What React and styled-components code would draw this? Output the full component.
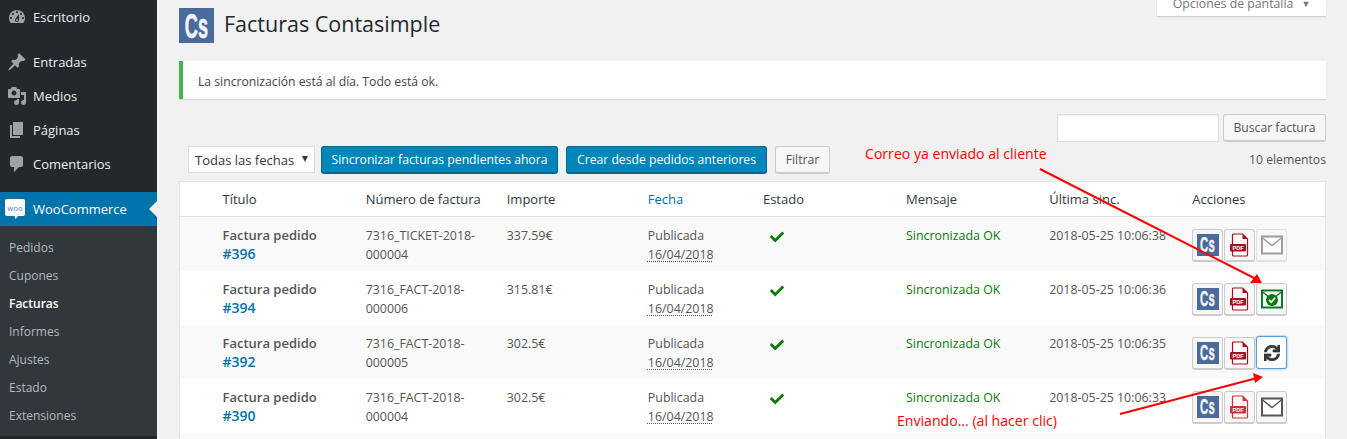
import React from "react";
import styled, { createGlobalStyle } from "styled-components";
import { FaCheck, FaSync } from "react-icons/fa";

const GlobalStyle = createGlobalStyle`
  html, body {
    margin: 0;
    padding: 0;
    background: #f1f1f1;
  }
  body {
    font-family: "Open Sans", "Liberation Sans", sans-serif;
    font-size: 13px;
    color: #444;
  }
`;

const Page = styled.div`
  position: relative;
  display: flex;
  width: 1347px;
  height: 439px;
  overflow: hidden;
`;

/* sidebar */
const Sidebar = styled.nav`
  flex: 0 0 157px;
  background: #23282d;
`;

const MenuGroup = styled.div`
  margin-bottom: 11px;
`;

const MenuItem = styled.div`
  position: relative;
  display: flex;
  align-items: center;
  height: 34px;
  padding-left: ${(p) => (p.$active ? "5px" : "7px")};
  gap: ${(p) => (p.$active ? "8px" : "6px")};
  font-size: 13px;
  color: ${(p) => (p.$active ? "#fff" : "#eee")};
  background: ${(p) => (p.$active ? "#0073aa" : "transparent")};

  svg {
    flex: 0 0 20px;
    fill: #9ea3a8;
  }

  ${(p) =>
    p.$active &&
    `&::after {
      content: "";
      position: absolute;
      right: 0;
      top: 9px;
      border: 8px solid transparent;
      border-right-color: #f1f1f1;
    }`}
`;

const SubMenu = styled.div`
  background: #32373c;
  padding: 7px 0;
`;

const SubItem = styled.div`
  height: 28px;
  line-height: 30px;
  padding-left: 9px;
  font-size: 12px;
  color: ${(p) => (p.$current ? "#fff" : "#b4b9be")};
  font-weight: ${(p) => (p.$current ? 600 : 400)};
`;

/* main */
const Main = styled.main`
  flex: 1;
  min-width: 0;
  padding: 8px 21px 0 22px;
`;

const ScreenTab = styled.div`
  position: absolute;
  top: 0;
  right: 21px;
  display: flex;
  justify-content: center;
  align-items: center;
  gap: 8px;
  width: 169px;
  height: 6px;
  padding-bottom: 10px;
  overflow: hidden;
  background: #fff;
  color: #72777c;
  font-size: 12.3px;
  box-shadow: 0 1px 1px rgba(0, 0, 0, 0.14);

  span {
    font-size: 9px;
  }
`;

const TitleRow = styled.header`
  display: flex;
  align-items: flex-start;
  gap: 10px;
  height: 35px;
  margin-bottom: 18px;
`;

const PageTitle = styled.h1`
  margin: 0;
  font-size: 21.5px;
  font-weight: 400;
  line-height: 32px;
  color: #23282d;
`;

const Notice = styled.div`
  height: 38px;
  line-height: 42px;
  padding-left: 15px;
  margin-bottom: 15px;
  background: #fff;
  border-left: 4px solid #46b450;
  box-shadow: 0 1px 1px rgba(0, 0, 0, 0.1);
  color: #444;
  font-size: 12.2px;
`;

const SearchRow = styled.div`
  display: flex;
  justify-content: flex-end;
  gap: 4px;
  margin-bottom: 4px;
`;

const SearchInput = styled.input`
  box-sizing: border-box;
  width: 162px;
  height: 28px;
  background: #fff;
  border: 1px solid #ddd;
  box-shadow: inset 0 1px 2px rgba(0, 0, 0, 0.07);
`;

const Toolbar = styled.div`
  display: flex;
  align-items: flex-start;
  height: 28px;
  padding-left: 9px;
  margin-bottom: 7px;
`;

const FakeSelect = styled.div`
  box-sizing: border-box;
  position: relative;
  width: 127px;
  height: 27px;
  line-height: 26px;
  padding-left: 6px;
  margin-right: 6px;
  background: #fff;
  border: 1px solid #ddd;
  color: #32373c;
  font-size: 13px;

  &::after {
    content: "";
    position: absolute;
    right: 6px;
    top: 9px;
    border: 3px solid transparent;
    border-top: 6px solid #32373c;
    border-bottom: 0;
  }
`;

const PrimaryButton = styled.button`
  box-sizing: border-box;
  width: ${(p) => p.$w}px;
  height: 28px;
  margin-right: 8px;
  padding: 0;
  font: inherit;
  font-size: 12.2px;
  color: #fff;
  background: #0085ba;
  border: 1px solid #006799;
  border-bottom-width: 2px;
  border-radius: 3px;
`;

const SecondaryButton = styled.button`
  box-sizing: border-box;
  width: ${(p) => p.$w}px;
  height: 28px;
  padding: 0;
  font: inherit;
  font-size: 12.2px;
  color: #555;
  background: #f7f7f7;
  border: 1px solid #ccc;
  border-bottom-width: 2px;
  border-radius: 3px;
`;

const ItemCount = styled.span`
  margin-left: auto;
  line-height: 28px;
  font-size: 12.2px;
  color: #555;
`;

const Table = styled.table`
  width: 1147px;
  table-layout: fixed;
  border-collapse: collapse;
  background: #fff;
  border: 1px solid #e5e5e5;
`;

const HeadCell = styled.th`
  height: 34px;
  padding: 0 8px;
  text-align: left;
  font-weight: 400;
  font-size: 13px;
  color: ${(p) => (p.$link ? "#0073aa" : "#32373c")};
  border-bottom: 1px solid #e1e1e1;
`;

const Row = styled.tr`
  height: 54px;
  background: ${(p) => (p.$alt ? "#f9f9f9" : "#fff")};
`;

const Cell = styled.td`
  box-sizing: border-box;
  height: 54px;
  padding: 9px 8px 7px;
  vertical-align: top;
  line-height: 19px;
  font-size: 12.4px;
  color: ${(p) => (p.$ok ? "#0a7a0a" : "#555")};
`;

const OrderTitle = styled.strong`
  display: block;
  line-height: 18px;
  font-size: 13px;
  font-weight: 600;
  color: #555;
`;

const OrderLink = styled.a`
  display: block;
  font-size: 14px;
  font-weight: 600;
  color: #0073aa;
`;

const DateAbbr = styled.abbr`
  text-decoration: underline dotted;
  text-underline-offset: 2px;
`;

const StatusIcon = styled(FaCheck)`
  display: block;
  margin: 4px 0 0 7px;
  width: 14px;
  height: 14px;
  color: #0a7a0a;
`;

const ActionsCell = styled.td`
  box-sizing: border-box;
  height: 54px;
  padding: 12px 0 0 8px;
  vertical-align: top;
`;

const Actions = styled.div`
  display: flex;
  gap: 1px;
  width: 98px;
`;

const ActionButton = styled.span`
  box-sizing: border-box;
  display: flex;
  align-items: center;
  justify-content: center;
  width: 31px;
  height: 33px;
  background: ${(p) => (p.$sending ? "#fff" : "#f7f7f7")};
  border: 1px solid ${(p) => (p.$sending ? "#5b9dd9" : "#ccc")};
  border-bottom-width: ${(p) => (p.$sending ? "1px" : "2px")};
  border-radius: 3px;
  box-shadow: ${(p) => (p.$sending ? "0 0 2px rgba(30,140,190,.8)" : "none")};
  transform: ${(p) => (p.$sending ? "translateY(-1px)" : "none")};
  opacity: ${(p) => (p.$faded ? 0.55 : 1)};
`;

const LogoBox = styled.span`
  display: flex;
  align-items: center;
  justify-content: center;
  flex: none;
  width: ${(p) => p.$size}px;
  height: ${(p) => p.$size}px;
  background: #4a6a9b;
`;

const LogoText = styled.span`
  display: block;
  font-family: "Liberation Sans", sans-serif;
  font-weight: 700;
  font-size: ${(p) => p.$size * 0.72}px;
  line-height: 0.8;
  letter-spacing: 0.5px;
  color: #f3f5f8;
  -webkit-text-stroke: ${(p) => p.$size * 0.012}px #f3f5f8;
  transform: scale(0.72, 1.42);
`;

/* annotations drawn on top of the capture */
const Arrows = styled.svg`
  position: absolute;
  left: 0;
  top: 0;
  pointer-events: none;
`;

const Note = styled.span`
  position: absolute;
  left: ${(p) => p.$x}px;
  top: ${(p) => p.$y}px;
  font-size: 14.1px;
  line-height: 18px;
  color: #f00;
  white-space: nowrap;
`;

const dashPaths = {
  dashboard:
    "M3.76 16h12.48c1.1-1.37 1.76-3.11 1.76-5 0-4.42-3.58-8-8-8s-8 3.58-8 8c0 1.89.66 3.63 1.76 5zM10 4c.55 0 1 .45 1 1s-.45 1-1 1-1-.45-1-1 .45-1 1-1zM6 6c.55 0 1 .45 1 1s-.45 1-1 1-1-.45-1-1 .45-1 1-1zm8 0c.55 0 1 .45 1 1s-.45 1-1 1-1-.45-1-1 .45-1 1-1zm-5.37 5.55L12 7v6c0 1.1-.9 2-2 2s-2-.9-2-2c0-.57.24-1.08.63-1.45zM4 10c.55 0 1 .45 1 1s-.45 1-1 1-1-.45-1-1 .45-1 1-1zm12 0c.55 0 1 .45 1 1s-.45 1-1 1-1-.45-1-1 .45-1 1-1zm-5 3c0-.55-.45-1-1-1s-1 .45-1 1 .45 1 1 1 1-.45 1-1z",
  post: "M10.44 3.02l1.82-1.82 6.36 6.35-1.83 1.82c-1.05-.68-2.48-.57-3.41.36l-.75.75c-.92.93-1.04 2.35-.35 3.41l-1.83 1.82-2.41-2.41-2.8 2.79c-.42.42-3.38 2.71-3.8 2.29s1.86-3.39 2.28-3.81l2.79-2.79L4.1 9.36l1.83-1.82c1.05.69 2.48.57 3.4-.36l.75-.75c.93-.92 1.05-2.35.36-3.41z",
  media:
    "M13 11V4c0-.55-.45-1-1-1h-1.67L9 1H5L3.67 3H2c-.55 0-1 .45-1 1v7c0 .55.45 1 1 1h10c.55 0 1-.45 1-1zM7 4.5c1.38 0 2.5 1.12 2.5 2.5S8.38 9.5 7 9.5 4.5 8.38 4.5 7 5.62 4.5 7 4.5zM14 6h5v10.5c0 1.38-1.12 2.5-2.5 2.5S14 17.88 14 16.5s1.12-2.5 2.5-2.5c.17 0 .34.02.5.05V9h-3V6zm-4 8.05V13h2v3.5c0 1.38-1.12 2.5-2.5 2.5S7 17.88 7 16.5 8.12 14 9.5 14c.17 0 .34.02.5.05z",
  page: "M6 15V2h10v13H6zm-1 1h8v2H3V5h2v11z",
  comments:
    "M5 2h9c1.1 0 2 .9 2 2v7c0 1.1-.9 2-2 2h-2l-5 5v-5H5c-1.1 0-2-.9-2-2V4c0-1.1.9-2 2-2z",
};

function DashIcon({ name }) {
  return (
    <svg width="20" height="20" viewBox="0 0 20 20">
      <path fillRule="evenodd" d={dashPaths[name]} />
    </svg>
  );
}

function WooIcon() {
  return (
    <svg width="20" height="20" viewBox="0 0 20 20" style={{ fill: "#fff" }}>
      <path d="M2 0h16a2 2 0 0 1 2 2v13a2 2 0 0 1-2 2h-5l-2.5 3-1-3H2a2 2 0 0 1-2-2V2a2 2 0 0 1 2-2z" />
      <text x="10" y="11.5" textAnchor="middle" fontSize="7.5" fontFamily="Open Sans" fill="#4a7fb0">
        woo
      </text>
    </svg>
  );
}

function CsLogo({ size }) {
  return (
    <LogoBox $size={size}>
      <LogoText $size={size}>Cs</LogoText>
    </LogoBox>
  );
}

function PdfIcon({ faded }) {
  const red = faded ? "#c33" : "#a80f1c";
  return (
    <svg width="20" height="24" viewBox="0 0 20 24">
      <path d="M3.5 1h9l5 5v16a1 1 0 0 1-1 1h-13a1 1 0 0 1-1-1V2a1 1 0 0 1 1-1z" fill="#fff" stroke={red} strokeWidth="1.2" />
      <path d="M12.5 1v5h5z" fill={red} />
      <rect x="0" y="11" width="16" height="7.5" rx="1" fill={red} />
      <text x="8" y="17" textAnchor="middle" fontSize="5.6" fontWeight="700" fontFamily="Liberation Sans" fill="#fff">
        PDF
      </text>
    </svg>
  );
}

function MailIcon({ sent }) {
  const line = sent ? "#0a7a2a" : "#555";
  return (
    <svg width="22" height="20" viewBox="0 0 22 20">
      <rect x="1" y="1.5" width="20" height="17" fill="#fff" stroke={line} strokeWidth="2" />
      <path d="M1 2.5l10 8 10-8" fill="none" stroke={line} strokeWidth="1.4" />
      {sent && (
        <>
          <circle cx="11" cy="11" r="6" fill="#0a7a0a" />
          <path d="M8 10.8l2.3 2.4 3.8-4.4" fill="none" stroke="#fff" strokeWidth="1.7" />
        </>
      )}
    </svg>
  );
}

const SyncIcon = styled(FaSync)`
  width: 16px;
  height: 16px;
  color: #32373c;
  stroke: currentColor;
  stroke-width: 24;
`;

const rows = [
  { order: "#396", num: "7316_TICKET-2018-000004", amount: "337.59€", time: "2018-05-25 10:06:38", mail: "faded" },
  { order: "#394", num: "7316_FACT-2018-000006", amount: "315.81€", time: "2018-05-25 10:06:36", mail: "sent" },
  { order: "#392", num: "7316_FACT-2018-000005", amount: "302.5€", time: "2018-05-25 10:06:35", mail: "sending" },
  { order: "#390", num: "7316_FACT-2018-000004", amount: "302.5€", time: "2018-05-25 10:06:33", mail: "idle" },
];

const mainMenu = [
  ["post", "Entradas"],
  ["media", "Medios"],
  ["page", "Páginas"],
  ["comments", "Comentarios"],
];

const subMenu = ["Pedidos", "Cupones", "Facturas", "Informes", "Ajustes", "Estado", "Extensiones"];

function MailAction({ state }) {
  if (state === "sending") {
    return (
      <ActionButton $sending>
        <SyncIcon />
      </ActionButton>
    );
  }
  return (
    <ActionButton $faded={state === "faded"}>
      <MailIcon sent={state === "sent"} />
    </ActionButton>
  );
}

export default function App() {
  return (
    <>
      <GlobalStyle />
      <Page>
        <Sidebar>
          <MenuGroup>
            <MenuItem>
              <DashIcon name="dashboard" />
              Escritorio
            </MenuItem>
          </MenuGroup>
          <MenuGroup>
            {mainMenu.map(([icon, label]) => (
              <MenuItem key={label}>
                <DashIcon name={icon} />
                {label}
              </MenuItem>
            ))}
          </MenuGroup>
          <MenuItem $active>
            <WooIcon />
            WooCommerce
          </MenuItem>
          <SubMenu>
            {subMenu.map((label) => (
              <SubItem key={label} $current={label === "Facturas"}>
                {label}
              </SubItem>
            ))}
          </SubMenu>
        </Sidebar>

        <Main>
          <ScreenTab>
            Opciones de pantalla <span>▼</span>
          </ScreenTab>
          <TitleRow>
            <CsLogo size={35} />
            <PageTitle>Facturas Contasimple</PageTitle>
          </TitleRow>
          <Notice>La sincronización está al día. Todo está ok.</Notice>
          <SearchRow>
            <SearchInput />
            <SecondaryButton $w={103}>Buscar factura</SecondaryButton>
          </SearchRow>
          <Toolbar>
            <FakeSelect>Todas las fechas</FakeSelect>
            <PrimaryButton $w={237}>Sincronizar facturas pendientes ahora</PrimaryButton>
            <PrimaryButton $w={201}>Crear desde pedidos anteriores</PrimaryButton>
            <SecondaryButton $w={55}>Filtrar</SecondaryButton>
            <ItemCount>10 elementos</ItemCount>
          </Toolbar>
          <Table>
            <colgroup>
              <col width="35" />
              <col width="143" />
              <col width="141" />
              <col width="141" />
              <col width="115" />
              <col width="143" />
              <col width="143" />
              <col width="143" />
              <col width="141" />
            </colgroup>
            <thead>
              <tr>
                <HeadCell />
                <HeadCell>Título</HeadCell>
                <HeadCell>Número de factura</HeadCell>
                <HeadCell>Importe</HeadCell>
                <HeadCell $link>Fecha</HeadCell>
                <HeadCell>Estado</HeadCell>
                <HeadCell>Mensaje</HeadCell>
                <HeadCell>Última sinc.</HeadCell>
                <HeadCell>Acciones</HeadCell>
              </tr>
            </thead>
            <tbody>
              {rows.map((r, i) => (
                <Row key={r.order} $alt={i % 2 === 0}>
                  <Cell />
                  <Cell>
                    <OrderTitle>Factura pedido</OrderTitle>
                    <OrderLink>{r.order}</OrderLink>
                  </Cell>
                  <Cell>{r.num}</Cell>
                  <Cell>{r.amount}</Cell>
                  <Cell>
                    Publicada
                    <br />
                    <DateAbbr>16/04/2018</DateAbbr>
                  </Cell>
                  <Cell>
                    <StatusIcon />
                  </Cell>
                  <Cell $ok>Sincronizada OK</Cell>
                  <Cell>{r.time}</Cell>
                  <ActionsCell>
                    <Actions>
                      <ActionButton>
                        <CsLogo size={22} />
                      </ActionButton>
                      <ActionButton>
                        <PdfIcon faded={r.mail === "idle"} />
                      </ActionButton>
                      <MailAction state={r.mail} />
                    </Actions>
                  </ActionsCell>
                </Row>
              ))}
              <Row $alt>
                <Cell colSpan="9" />
              </Row>
            </tbody>
          </Table>
        </Main>

        <Note $x={865} $y={145}>Correo ya enviado al cliente</Note>
        <Note $x={897} $y={412}>Enviando... (al hacer clic)</Note>
        <Arrows width="1347" height="439" viewBox="0 0 1347 439">
          <path d="M1040 169L1256 279M1120 414L1257 378" stroke="#f00" strokeWidth="2" fill="none" />
          <path d="M1262 283L1250 283L1257 274zM1263 377L1253 373L1255 383z" fill="#f00" />
        </Arrows>
      </Page>
    </>
  );
}
